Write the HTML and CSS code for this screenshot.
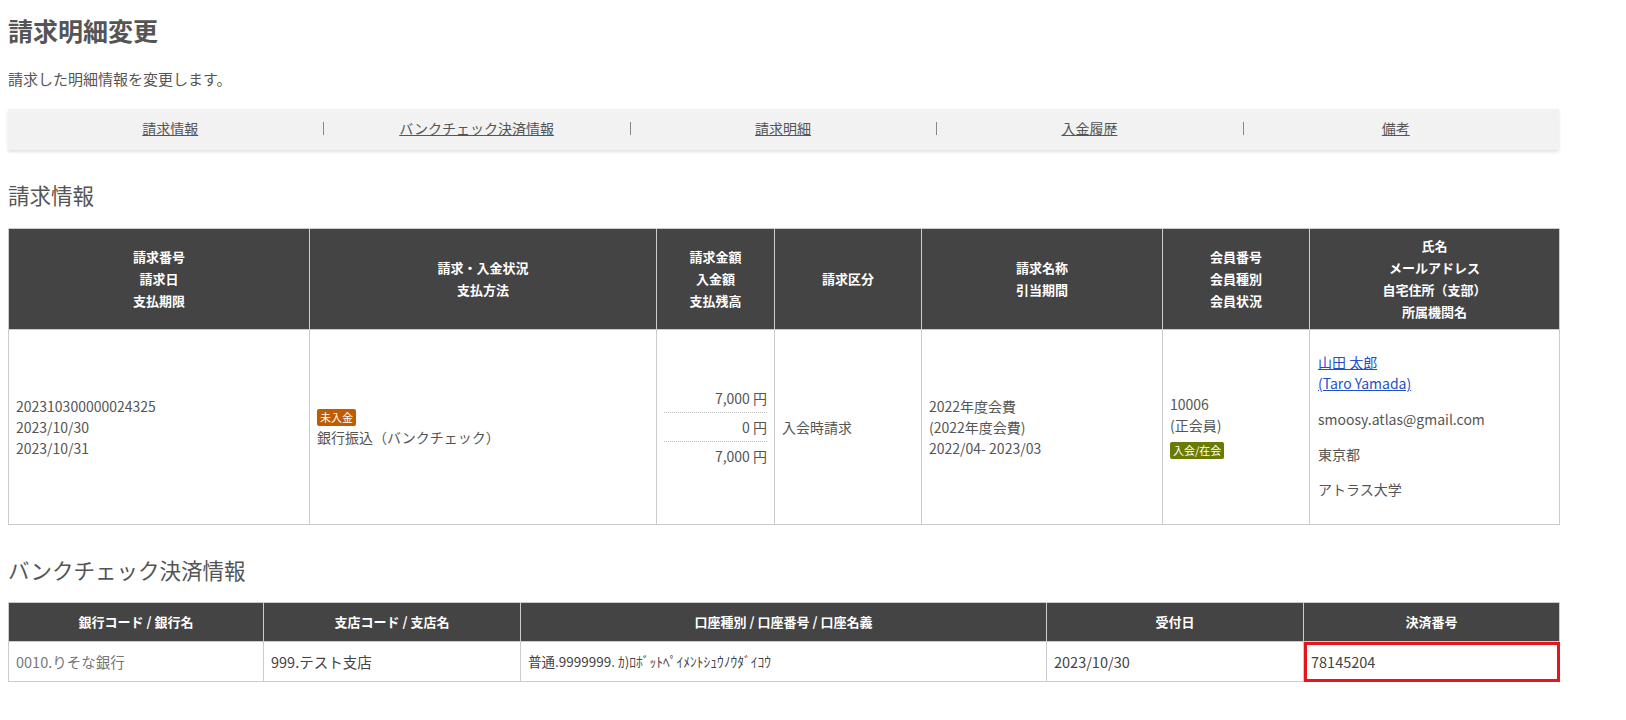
FILE: index.html
```html
<!DOCTYPE html>
<html lang="ja">
<head>
    <meta charset="UTF-8">
    <meta name="viewport" content="width=device-width, initial-scale=1.0">
    <title>請求明細変更</title>
    <link rel="stylesheet" href="styles.css">
</head>
<body>
    <div class="page">
        <h1 class="page-title">請求明細変更</h1>
        <p class="page-lead">請求した明細情報を変更します。</p>

        <!-- Anchor navigation -->
        <nav class="anchor-nav">
            <ul>
                <li><a href="#billing">請求情報</a></li>
                <li><a href="#bankcheck">バンクチェック決済情報</a></li>
                <li><a href="#detail">請求明細</a></li>
                <li><a href="#payment">入金履歴</a></li>
                <li><a href="#note">備考</a></li>
            </ul>
        </nav>

        <!-- Billing info -->
        <h2 class="section-title" id="billing">請求情報</h2>
        <table class="data-table billing-table">
            <colgroup>
                <col style="width: 301px">
                <col style="width: 347px">
                <col style="width: 118px">
                <col style="width: 147px">
                <col style="width: 241px">
                <col style="width: 147px">
                <col style="width: 250px">
            </colgroup>
            <thead>
                <tr>
                    <th>請求番号<br>請求日<br>支払期限</th>
                    <th>請求・入金状況<br>支払方法</th>
                    <th>請求金額<br>入金額<br>支払残高</th>
                    <th>請求区分</th>
                    <th>請求名称<br>引当期間</th>
                    <th>会員番号<br>会員種別<br>会員状況</th>
                    <th>氏名<br>メールアドレス<br>自宅住所（支部）<br>所属機関名</th>
                </tr>
            </thead>
            <tbody>
                <tr>
                    <td>202310300000024325<br>2023/10/30<br>2023/10/31</td>
                    <td>
                        <div><span class="label label-unpaid">未入金</span></div>
                        <div>銀行振込（バンクチェック）</div>
                    </td>
                    <td class="amounts">
                        <div class="amount">7,000 円</div>
                        <div class="amount">0 円</div>
                        <div class="amount">7,000 円</div>
                    </td>
                    <td>入会時請求</td>
                    <td>2022年度会費<br>(2022年度会費)<br>2022/04- 2023/03</td>
                    <td>
                        <div>10006<br>(正会員)</div>
                        <div class="label-row"><span class="label label-member">入会/在会</span></div>
                    </td>
                    <td class="member-cell">
                        <p><a href="#">山田 太郎<br>(Taro Yamada)</a></p>
                        <p class="email">smoosy.atlas@gmail.com</p>
                        <p>東京都</p>
                        <p>アトラス大学</p>
                    </td>
                </tr>
            </tbody>
        </table>

        <!-- Bank check settlement -->
        <h2 class="section-title" id="bankcheck">バンクチェック決済情報</h2>
        <table class="data-table bank-table">
            <colgroup>
                <col style="width: 255px">
                <col style="width: 257px">
                <col style="width: 526px">
                <col style="width: 257px">
                <col style="width: 256px">
            </colgroup>
            <thead>
                <tr>
                    <th>銀行コード / 銀行名</th>
                    <th>支店コード / 支店名</th>
                    <th>口座種別 / 口座番号 / 口座名義</th>
                    <th>受付日</th>
                    <th>決済番号</th>
                </tr>
            </thead>
            <tbody>
                <tr>
                    <td class="muted">0010.りそな銀行</td>
                    <td>999.テスト支店</td>
                    <td class="account">普通.9999999. ｶ)ﾛﾎﾞｯﾄﾍﾟｲﾒﾝﾄｼｭｳﾉｳﾀﾞｲｺｳ</td>
                    <td>2023/10/30</td>
                    <td class="highlight">78145204</td>
                </tr>
            </tbody>
        </table>
    </div>
</body>
</html>
```

FILE: styles.css
```css
body {
    margin: 0;
    background: #fff;
    color: #555;
    font-family: "Noto Sans CJK JP", "Noto Sans", sans-serif;
    font-size: 14px;
    line-height: 21px;
}

.page {
    width: 1551px;
    padding: 0 8px 40px;
}

.page-title {
    margin: 12px 0 0;
    font-size: 25px;
    line-height: 36px;
    font-weight: bold;
    color: #555;
}

.page-lead {
    margin: 20px 0 0;
    font-size: 15px;
}

/* Anchor navigation */
.anchor-nav {
    margin-top: 20px;
    background: #f2f2f2;
    box-shadow: 0 2px 3px rgba(0, 0, 0, 0.12);
    padding: 0 10px 0 9px;
}

.anchor-nav ul {
    display: flex;
    margin: 0;
    padding: 0;
    list-style: none;
}

.anchor-nav li {
    flex: 1;
    text-align: center;
    line-height: 39px;
    padding-bottom: 2px;
    position: relative;
}

.anchor-nav li + li::before {
    content: "";
    position: absolute;
    left: 0;
    top: 13px;
    height: 13px;
    border-left: 1px solid #888;
}

.anchor-nav a {
    color: #555;
    text-decoration: underline;
}

.section-title {
    margin: 30px 0 18px;
    font-size: 21.5px;
    line-height: 30px;
    font-weight: normal;
    color: #555;
}

.billing-table + .section-title {
    margin-top: 30px;
    margin-bottom: 17px;
}

/* Tables */
.data-table {
    width: 1551px;
    table-layout: fixed;
    border-collapse: collapse;
}

.data-table th {
    background: #444;
    color: #fff;
    font-size: 13px;
    font-weight: bold;
    line-height: 22px;
    padding: 6px 7px;
    border: 1px solid #ccc;
    text-align: center;
}

.data-table td {
    padding: 7px;
    border: 1px solid #ccc;
    vertical-align: middle;
    text-align: left;
}

.amounts {
    padding: 7px 6px;
}

.amount {
    text-align: right;
    padding: 4px 0 3px;
    border-bottom: 1px dotted #bbb;
}

.amount:last-child {
    border-bottom: none;
}

.data-table td.member-cell {
    padding: 8px 8px 10px;
}

.member-cell p {
    margin: 14px 0;
}

.member-cell a {
    color: #1f4fc9;
    text-decoration: underline;
}

.member-cell .email {
    line-height: 22px;
}

.label {
    display: inline-block;
    color: #fff;
    font-size: 11px;
    line-height: 17px;
    padding: 0 3px;
    border-radius: 2px;
}

.label-unpaid {
    background: #c05b00;
}

.label-member {
    background: #6b7a00;
}

.label-row {
    margin-top: 3px;
}

.bank-table th {
    padding: 8px 7px;
}

.bank-table td {
    padding: 9px 7px;
    color: #444;
    font-size: 14.5px;
}

.bank-table td.muted {
    color: #777;
}

.bank-table td.account {
    font-size: 13.5px;
}

.bank-table td.highlight {
    outline: 3px solid #e8141c;
    outline-offset: -3px;
}
```
